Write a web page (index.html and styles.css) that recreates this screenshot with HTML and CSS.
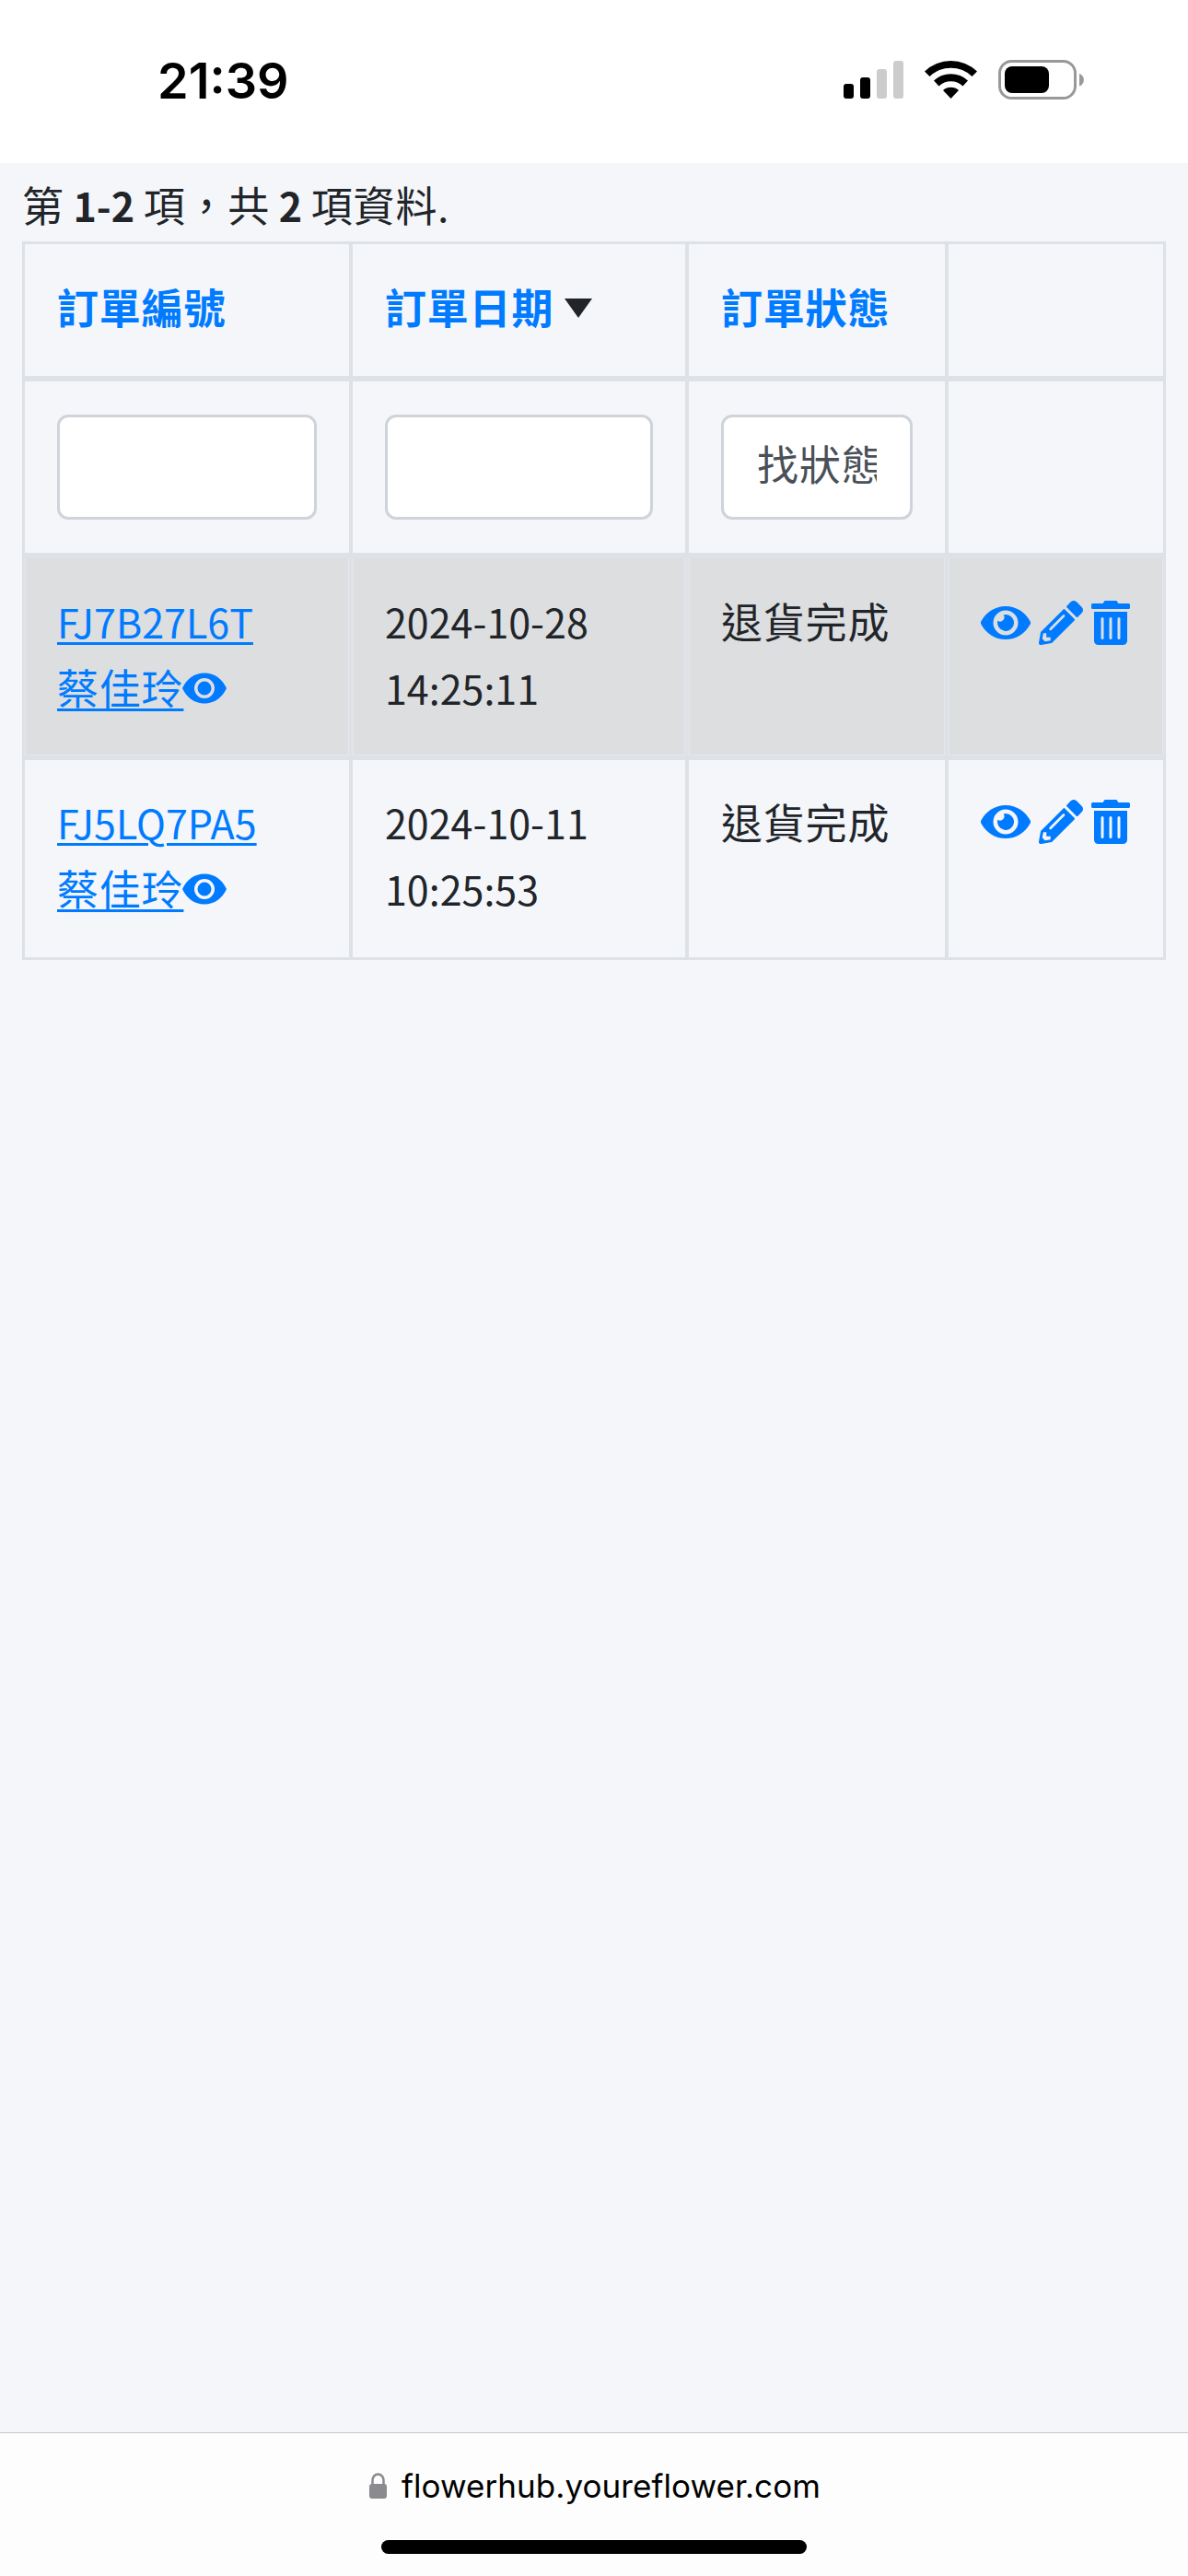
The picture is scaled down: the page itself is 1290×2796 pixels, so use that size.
FILE: index.html
```html
<!DOCTYPE html>
<html lang="zh-Hant">
<head>
<meta charset="utf-8">
<title>flowerhub.youreflower.com</title>
<link rel="stylesheet" href="styles.css">
</head>
<body>
<svg class="sprite" aria-hidden="true">
  <symbol id="view" viewBox="0 0 576 512"><path d="M573 241C518 136 411 64 288 64S58 136 3 241a32 32 0 000 30c55 105 162 177 285 177s230-72 285-177a32 32 0 000-30zM288 400a144 144 0 11144-144 144 144 0 01-144 144zm0-240a95 95 0 00-25 4 48 48 0 01-67 67 96 96 0 1092-71z"/></symbol>
  <symbol id="pencil" viewBox="0 0 512 512"><path d="M498 142l-46 46c-5 5-13 5-17 0L324 77c-5-5-5-12 0-17l46-46c19-19 49-19 68 0l60 60c19 19 19 49 0 68zm-214-42L22 362 0 484c-3 16 12 30 28 28l122-22 262-262c5-5 5-13 0-17L301 100c-4-5-12-5-17 0zM124 340c-5-6-5-14 0-20l154-154c6-5 14-5 20 0s5 14 0 20L144 340c-6 5-14 5-20 0zm-36 84h48v36l-64 12-32-31 12-65h36v48z"/></symbol>
  <symbol id="trash" viewBox="0 0 448 512"><path d="M32 464a48 48 0 0048 48h288a48 48 0 0048-48V128H32zm272-256a16 16 0 0132 0v224a16 16 0 01-32 0zm-96 0a16 16 0 0132 0v224a16 16 0 01-32 0zm-96 0a16 16 0 0132 0v224a16 16 0 01-32 0zM432 32H312l-9-19a24 24 0 00-22-13H167a24 24 0 00-22 13l-9 19H16A16 16 0 000 48v32a16 16 0 0016 16h416a16 16 0 0016-16V48a16 16 0 00-16-16z"/></symbol>
  <symbol id="eye" viewBox="0 0 48 34"><path fill-rule="evenodd" d="M24 0.5C13 0.5 4.5 7 0 17c4.500 10 13 16.500 24 16.500S43.500 27 48 17C43.500 7 35 0.500 24 0.500zM24 28a11 11 0 110-22 11 11 0 010 22zM24 9.500a7.500 7.500 0 100 15 7.500 7.500 0 000-15z"/></symbol>
</svg>

<header class="status-bar">
  <time class="clock">21:39</time>
  <div class="status-icons">
    <svg class="signal" viewBox="0 0 65 41">
      <rect x="0" y="25" width="11" height="16" rx="3"/>
      <rect x="18" y="18" width="11" height="23" rx="3"/>
      <rect class="faint" x="36" y="9" width="11" height="32" rx="3"/>
      <rect class="faint" x="54" y="0" width="11" height="41" rx="3"/>
    </svg>
    <svg class="wifi" viewBox="0 0 57 42">
      <path d="M0 12.500A41 41 0 0157 12.500L51.500 18A33 33 0 005.500 18z"/>
      <path d="M10 22.500A27 27 0 0147 22.500L41.500 28.500A19 19 0 0015.500 28.500z"/>
      <path d="M20 33A13 13 0 0137 33L28.500 42z"/>
    </svg>
    <svg class="battery" viewBox="0 0 93 43">
      <rect class="shell" x="1.500" y="1.500" width="82" height="40" rx="13"/>
      <rect x="7" y="7" width="48" height="29" rx="8"/>
      <path class="cap" d="M88 15c6.500 2 6.500 11.500 0 13.500z"/>
    </svg>
  </div>
</header>

<main class="page">
  <p class="summary"><span class="zh">第</span> <b>1-2</b> <span class="zh">項，共</span> <b>2</b> <span class="zh">項資料</span>.</p>
  <table class="orders">
    <colgroup><col class="c-id"><col class="c-date"><col class="c-state"><col class="c-act"></colgroup>
    <thead>
      <tr class="heads">
        <th><a class="zh">訂單編號</a></th>
        <th><a class="zh">訂單日期</a><span class="sort-desc"></span></th>
        <th><a class="zh">訂單狀態</a></th>
        <th></th>
      </tr>
      <tr class="filters">
        <td><div class="field"></div></td>
        <td><div class="field"></div></td>
        <td><div class="field"><span class="field-text zh">找狀態</span></div></td>
        <td></td>
      </tr>
    </thead>
    <tbody>
      <tr class="odd">
        <td><a class="link">FJ7B27L6T</a><br><a class="link zh">蔡佳玲</a><svg class="eye"><use href="#eye"/></svg></td>
        <td>2024-10-28 14:25:11</td>
        <td><span class="zh">退貨完成</span></td>
        <td><div class="actions"><svg class="view"><use href="#view"/></svg><svg class="pencil"><use href="#pencil"/></svg><svg class="trash"><use href="#trash"/></svg></div></td>
      </tr>
      <tr class="even">
        <td><a class="link">FJ5LQ7PA5</a><br><a class="link zh">蔡佳玲</a><svg class="eye"><use href="#eye"/></svg></td>
        <td>2024-10-11 10:25:53</td>
        <td><span class="zh">退貨完成</span></td>
        <td><div class="actions"><svg class="view"><use href="#view"/></svg><svg class="pencil"><use href="#pencil"/></svg><svg class="trash"><use href="#trash"/></svg></div></td>
      </tr>
    </tbody>
  </table>
</main>

<footer class="address-bar">
  <div class="address">
    <svg class="lock" viewBox="0 0 19 28"><rect x="0" y="12" width="19" height="16" rx="3"/><path d="M3.500 13V8a6 6.500 0 0112 0v5"/></svg>
    <span>flowerhub.youreflower.com</span>
  </div>
  <div class="home-indicator"></div>
</footer>
</body>
</html>
```
FILE: styles.css
```css
* { box-sizing: border-box; }

body {
  margin: 0;
  height: 2796px;
  display: flex;
  flex-direction: column;
  overflow: hidden;
  background: #f4f6fa;
  color: #212529;
  font: 43px/72px "Noto Sans CJK TC", sans-serif;
}

svg { display: block; }
.sprite { display: none; }
.zh { font-size: 45px; line-height: 66px; letter-spacing: 0.8px; }

/* Status bar */
.status-bar {
  height: 177px;
  padding: 0 113px 0 171px;
  display: flex;
  justify-content: space-between;
  background: #fff;
  color: #000;
}
.clock {
  padding-top: 52px;
  font: 600 54px/72px Inter, sans-serif;
}
.status-icons {
  display: flex;
  align-items: flex-start;
  padding-top: 65px;
}
.signal { width: 65px; height: 41px; margin: 1px 23px 0 0; }
.faint { fill: #ccc; }
.wifi { width: 57px; height: 42px; margin-right: 23px; }
.battery { width: 93px; height: 43px; }
.shell { fill: none; stroke: #999; stroke-width: 3px; }
.cap { fill: #999; }

/* Order list */
.page { flex: 1; padding: 0 24px; }
.summary { margin: 0; height: 85px; padding-top: 9px; }

.orders {
  width: 1242px;
  table-layout: fixed;
  border: 3px solid #dee2e6;
  border-collapse: separate;
  border-spacing: 0;
}
.c-id { width: 356px; }
.c-date { width: 365px; }
.c-state { width: 282px; }
.c-act { width: 233px; }

th, td {
  padding: 32px 35px 0;
  border: 0 solid #dee2e6;
  border-right-width: 4px;
  text-align: left;
  vertical-align: top;
}
th:last-child, td:last-child { border-right-width: 0; }
.heads th { height: 149px; border-bottom-width: 6px; color: #007bff; }
.filters td { height: 192px; padding-top: 36px; border-bottom-width: 6px; }
.odd td { height: 219px; border-bottom-width: 5px; background: #dddee0; box-shadow: inset 1px 0 #e5e7ec, inset -1px -1px #e5e7ec; }
.even td { height: 214px; padding-top: 31px; }

.sort-desc {
  display: inline-block;
  margin-left: 12px;
  vertical-align: 7px;
  border: 15px solid transparent;
  border-top: 21px solid #212529;
  border-bottom: 0;
}

.field {
  height: 114px;
  padding: 14px 36px;
  background: #fff;
  border: 3px solid #ced4da;
  border-radius: 12px;
  color: #495057;
}
.field-text { display: block; overflow: hidden; white-space: nowrap; line-height: 72px; }

.link { color: #007bff; text-decoration: underline; text-decoration-thickness: 3px; text-underline-offset: 4px; }
.eye { display: inline-block; width: 48px; height: 34px; margin-left: -1px; vertical-align: 1px; fill: #007bff; }

.actions { display: flex; gap: 9px; padding-top: 14px; fill: #007bff; }
.even .actions { padding-top: 12px; }
.view { width: 54px; height: 48px; }
.pencil { width: 48px; height: 48px; }
.trash { width: 42px; height: 48px; }

/* Browser address bar */
.address-bar {
  height: 156px;
  border-top: 1px solid #c6c8ce;
  background: #fdfdfd;
  color: #000;
}
.address {
  display: flex;
  justify-content: center;
  gap: 16px;
  padding: 29px 0 0 2px;
  font: 35px/56px Inter, sans-serif;
  letter-spacing: 0.06px;
}
.lock { width: 19px; height: 28px; margin-top: 14px; fill: #8a8a8f; }
.lock path { fill: none; stroke: #8a8a8f; stroke-width: 2.5px; }
.home-indicator { width: 462px; height: 15px; margin: 31px auto 0; border-radius: 8px; background: #000; }
```
